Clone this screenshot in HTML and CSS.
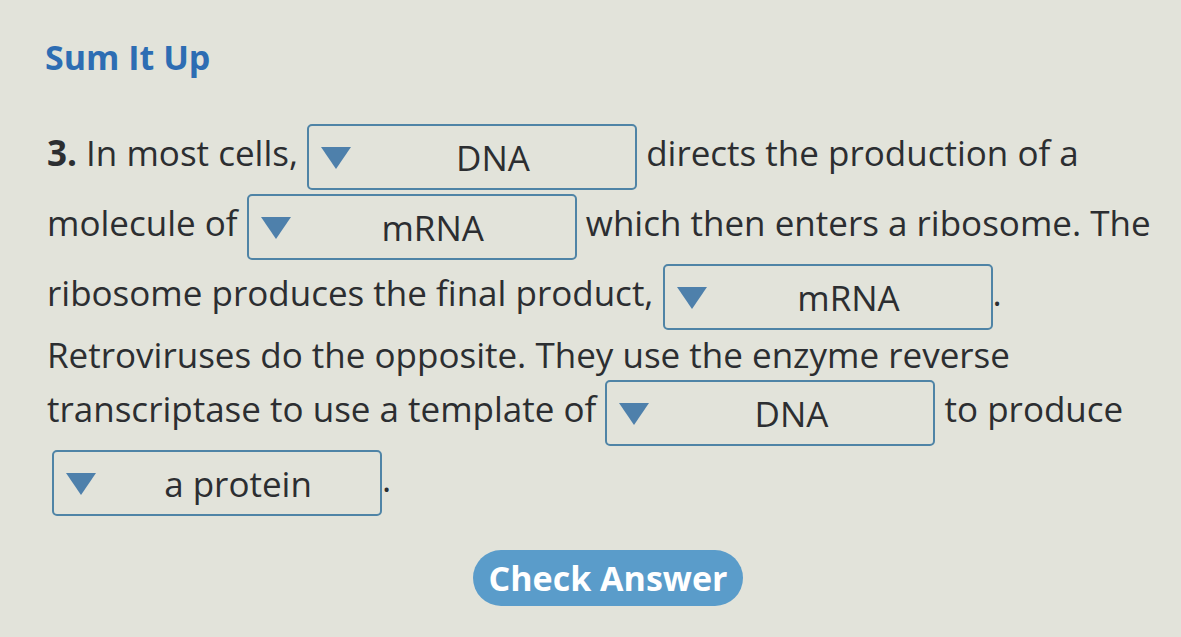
FILE: index.html
```html
<!DOCTYPE html>
<html>
<head>
<meta charset="utf-8">
<link rel="stylesheet" href="styles.css">
</head>
<body>
<main class="page">
  <h1 class="title">Sum It Up</h1>
  <p class="question"><b class="num">3.</b> In most cells, <span class="drop"><span class="tri"></span><span class="val">DNA</span></span> directs the production of a<br>molecule of <span class="drop"><span class="tri"></span><span class="val">mRNA</span></span> which then enters a ribosome. The<br>ribosome produces the final product, <span class="drop"><span class="tri"></span><span class="val">mRNA</span></span>.<br>Retroviruses do the opposite. They use the enzyme reverse<br>transcriptase to use a template of <span class="drop"><span class="tri"></span><span class="val">DNA</span></span> to produce<br><span class="drop first"><span class="tri"></span><span class="val">a protein</span></span>.</p>
  <div class="actions"><button class="check">Check Answer</button></div>
</main>
</body>
</html>
```
FILE: styles.css
```css
html, body {
  margin: 0;
  padding: 0;
  background: #e2e3da;
  overflow: hidden;
}
body {
  font-family: "Open Sans", "Liberation Sans", sans-serif;
  color: #2c2e31;
}
.page {
  width: 1136px;
  padding: 34px 0 0 45px;
}
.title {
  margin: 0;
  font-size: 34px;
  font-weight: 700;
  color: #2d6db3;
  line-height: 46px;
}
.question {
  margin: 42px 0 0 2px;
  font-size: 35px;
  line-height: 46px;
  white-space: nowrap;
}
.num {
  font-weight: 700;
}
.drop {
  display: inline-flex;
  align-items: center;
  vertical-align: middle;
  box-sizing: border-box;
  width: 330px;
  height: 66px;
  margin: 2px 0;
  padding-left: 12px;
  border: 2px solid #4f84a6;
  border-radius: 5px;
  line-height: 1;
}
.drop.first {
  margin-left: 5px;
}
.tri {
  width: 0;
  height: 0;
  border-left: 15px solid transparent;
  border-right: 15px solid transparent;
  border-top: 22px solid #4e80ab;
  margin-top: 2px;
}
.val {
  flex: 1;
  text-align: center;
}
.actions {
  display: flex;
  justify-content: center;
  padding-right: 10px;
  margin-top: 32px;
}
.check {
  font-family: "Open Sans", "Liberation Sans", sans-serif;
  font-size: 34px;
  font-weight: 700;
  color: #fff;
  background: #5a9cca;
  border: none;
  border-radius: 28px;
  height: 56px;
  width: 270px;
  padding: 0;
}
```
